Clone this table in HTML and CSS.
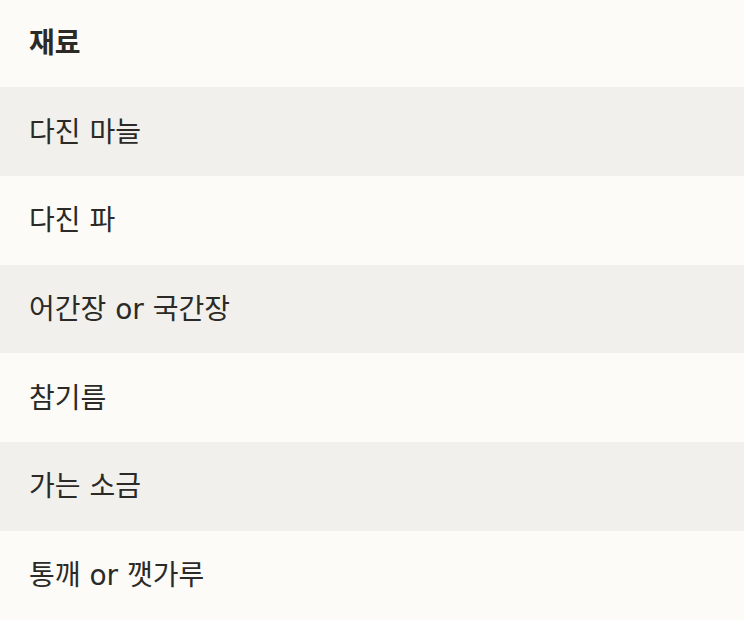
FILE: index.html
```html
<!DOCTYPE html>
<html lang="ko">
<head>
<meta charset="utf-8">
<link rel="stylesheet" href="styles.css">
</head>
<body>
<div class="table">
  <div class="row head">재료</div>
  <div class="row alt">다진 마늘</div>
  <div class="row">다진 파</div>
  <div class="row alt">어간장 or 국간장</div>
  <div class="row">참기름</div>
  <div class="row alt">가는 소금</div>
  <div class="row">통깨 or 깻가루</div>
</div>
</body>
</html>
```
FILE: styles.css
```css
html, body {
  margin: 0;
  padding: 0;
  background: #fcfbf8;
  overflow: hidden;
}
.table {
  display: grid;
  grid-template-rows: repeat(7, 1fr);
  height: 621px;
  margin-top: -1.5px;
  font-family: "DejaVu Sans", "Noto Sans CJK KR", sans-serif;
  font-size: 28px;
  color: #2b2a26;
}
.row {
  display: flex;
  align-items: center;
  padding: 0 29px 4px;
  background: #fcfbf8;
}
.row.alt {
  background: #f1f0ed;
}
.row.head {
  font-weight: 700;
}
```
